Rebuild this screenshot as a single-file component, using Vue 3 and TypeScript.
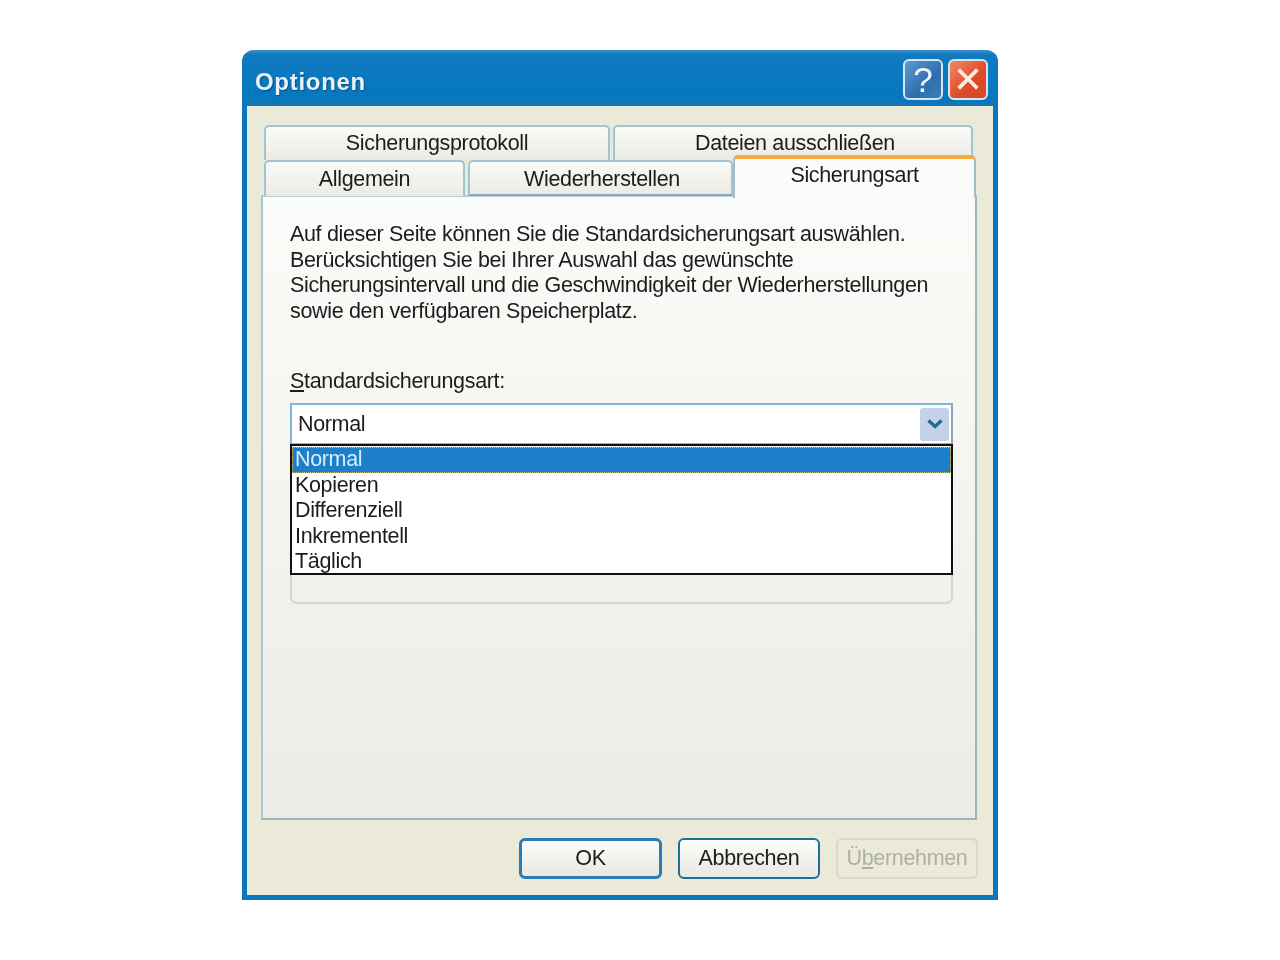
<script setup lang="ts">
const topTabs = ['Sicherungsprotokoll', 'Dateien ausschließen']
const items = ['Normal', 'Kopieren', 'Differenziell', 'Inkrementell', 'Täglich']
const lines = [
  'Auf dieser Seite können Sie die Standardsicherungsart auswählen.',
  'Berücksichtigen Sie bei Ihrer Auswahl das gewünschte',
  'Sicherungsintervall und die Geschwindigkeit der Wiederherstellungen',
  'sowie den verfügbaren Speicherplatz.',
]
</script>

<template>
  <div class="page">
    <div class="window">
      <header class="titlebar">
        <span class="title">Optionen</span>
        <div class="controls">
          <button class="ctl help">?</button>
          <button class="ctl close" aria-label="Schließen">
            <svg width="26" height="26" viewBox="0 0 26 26">
              <path d="M5 5 L21 21 M21 5 L5 21" stroke="#fbe9e2" stroke-width="3.8" stroke-linecap="square" fill="none" />
            </svg>
          </button>
        </div>
      </header>
      <div class="client">
        <div class="tabs">
          <div class="tab-row row-top">
            <div class="tab t1">{{ topTabs[0] }}</div>
            <div class="tab t2">{{ topTabs[1] }}</div>
          </div>
          <div class="tab-row row-bottom">
            <div class="tab t3">Allgemein</div>
            <div class="tab t4">Wiederherstellen</div>
            <div class="tab active">Sicherungsart</div>
          </div>
        </div>
        <section class="panel">
          <p class="intro">
            <span v-for="l in lines" :key="l" class="line">{{ l }}</span>
          </p>
          <label class="field-label"><u>S</u>tandardsicherungsart:</label>
          <div class="combo-wrap">
            <div class="combo">
              <span class="combo-value">Normal</span>
              <span class="combo-btn">
                <svg width="18" height="12" viewBox="0 0 18 12">
                  <path d="M2.5 2.5 L9 8.5 L15.5 2.5" stroke="#1f6a94" stroke-width="3.4" fill="none" />
                </svg>
              </span>
            </div>
            <ul class="list">
              <li v-for="(it, i) in items" :key="it" :class="{ sel: i === 0 }">{{ it }}</li>
            </ul>
            <div class="group"></div>
          </div>
        </section>
        <footer class="actions">
          <button class="btn default">OK</button>
          <button class="btn">Abbrechen</button>
          <button class="btn disabled">Ü<u>b</u>ernehmen</button>
        </footer>
      </div>
    </div>
  </div>
</template>

<style scoped>
.page {
  width: 1280px;
  height: 960px;
  background: #fff;
  padding: 50px 0 0 242px;
  box-sizing: border-box;
  font-family: "Liberation Sans", Arial, sans-serif;
  font-size: 21.5px;
  letter-spacing: -0.34px;
  color: #1c1c1c;
}
.window {
  width: 756px;
  height: 850px;
  display: flex;
  flex-direction: column;
  background: #0b76bf;
  border-radius: 12px 12px 0 0;
  filter: blur(0.45px);
}
.titlebar {
  height: 56px;
  flex: none;
  display: flex;
  align-items: center;
  justify-content: space-between;
  padding: 2px 10px 0 13px;
  box-sizing: border-box;
  border-radius: 12px 12px 0 0;
  background: linear-gradient(#3f8fca 0, #1079c0 5px, #0678bf 45px, #0f76b8 54px, #1a79b5 56px);
}
.title {
  color: #e6f1f8;
  font-weight: 700;
  font-size: 24px;
  letter-spacing: 0.7px;
  margin-top: 6px;
  text-shadow: 1px 1px 1px #0a4f80;
}
.controls {
  display: flex;
  gap: 5px;
}
.ctl {
  width: 40px;
  height: 41px;
  padding: 0;
  border: 2px solid #d5e6f2;
  border-radius: 6px;
  color: #f2f7fb;
  display: flex;
  align-items: center;
  justify-content: center;
}
.help {
  background: linear-gradient(135deg, #5f9ad0, #2f6fb0 60%, #3a7bb8);
  font-family: "Liberation Sans", sans-serif;
  font-size: 35px;
  line-height: 1;
}
.close {
  background: linear-gradient(135deg, #ef8a68, #dc4a28 60%, #d9472a);
}
.client {
  flex: 1;
  margin: 0 5px 5px;
  background: #ebead9;
  padding: 19px 20px 0 14px;
  display: flex;
  flex-direction: column;
  min-height: 0;
}
.tabs {
  margin-left: 3px;
  flex: none;
}
.tab-row {
  display: flex;
}
.row-top {
  gap: 3px;
  height: 35px;
}
.row-bottom {
  height: 36px;
  position: relative;
  z-index: 2;
}
.tab {
  flex: none;
  box-sizing: border-box;
  border: 2px solid #9fc4d6;
  border-bottom: none;
  border-radius: 5px 5px 0 0;
  background: linear-gradient(#fafaf7, #ecebe3);
  display: flex;
  align-items: center;
  justify-content: center;
}
.t1 { width: 346px; }
.t2 { width: 360px; padding-left: 4px; }
.t3 { width: 201px; margin-right: 3px; }
.t4 { width: 265px; border-bottom: 2px solid #8fa9b4; padding-left: 3px; padding-top: 2px; }
.active {
  width: 243px;
  margin: -5px 0 -2px;
  height: 43px;
  background: #fbfbf9;
  border: 2px solid #a6bcc4;
  border-top: 4px solid #f4ab3c;
  border-bottom: none;
  align-items: flex-start;
  padding-top: 4px;
  position: relative;
  z-index: 3;
}
.panel {
  flex: 1;
  min-height: 0;
  width: 716px;
  box-sizing: border-box;
  border: 2px solid #9db5bd;
  border-top-color: #b5d0dc;
  border-left-color: #a9c6d2;
  background: linear-gradient(#fbfbf9, #ecece6);
  padding: 25px 23px 0 27px;
  margin-top: -1px;
}
.intro {
  margin: 0;
  line-height: 25.5px;
  white-space: nowrap;
}
.line { display: block; }
.field-label {
  display: block;
  margin-top: 44px;
  line-height: 26px;
}
.combo-wrap {
  position: relative;
  margin-top: 9px;
  width: 663px;
}
.combo {
  box-sizing: border-box;
  height: 42px;
  border: 2px solid #7fb8d6;
  border-right-color: #8aa7b5;
  background: #fff;
  display: flex;
  align-items: center;
  justify-content: space-between;
  padding: 0 2px 0 6px;
}
.combo-btn {
  width: 29px;
  height: 33px;
  background: #c3d2e8;
  border-radius: 3px;
  display: flex;
  align-items: center;
  justify-content: center;
}
.list {
  position: absolute;
  left: 0;
  right: 0;
  top: 41px;
  margin: 0;
  padding: 0;
  list-style: none;
  box-sizing: border-box;
  height: 131px;
  background: #fff;
  border: 2px solid #111;
  z-index: 4;
}
.list li {
  height: 25.5px;
  line-height: 25.5px;
  padding-left: 3px;
  position: relative;
  top: 1px;
}
.list .sel {
  background: #1b7fca;
  color: #d8ecfb;
  outline: 1px dotted #c9c08a;
  outline-offset: -1px;
}
.group {
  box-sizing: border-box;
  margin-top: 119px;
  height: 40px;
  border: 2px solid #d3d6cf;
  border-top: none;
  border-radius: 0 0 7px 7px;
}
.actions {
  flex: none;
  height: 75px;
  box-sizing: border-box;
  display: flex;
  justify-content: flex-end;
  align-items: flex-start;
  gap: 16px;
  padding: 18px 0 0;
  margin-right: -5px;
}
.btn {
  font: inherit;
  letter-spacing: inherit;
  color: #1c1c1c;
  width: 142px;
  height: 41px;
  padding: 0;
  box-sizing: border-box;
  border: 2px solid #1d6e9e;
  border-radius: 6px;
  background: linear-gradient(#fdfdfb, #e8e8e0);
}
.default {
  width: 143px;
  border: 3px solid #2a7cb8;
}
.disabled {
  border: 2px solid #d8d8cb;
  color: #aeb0a6;
  background: #ebead9;
}
</style>
